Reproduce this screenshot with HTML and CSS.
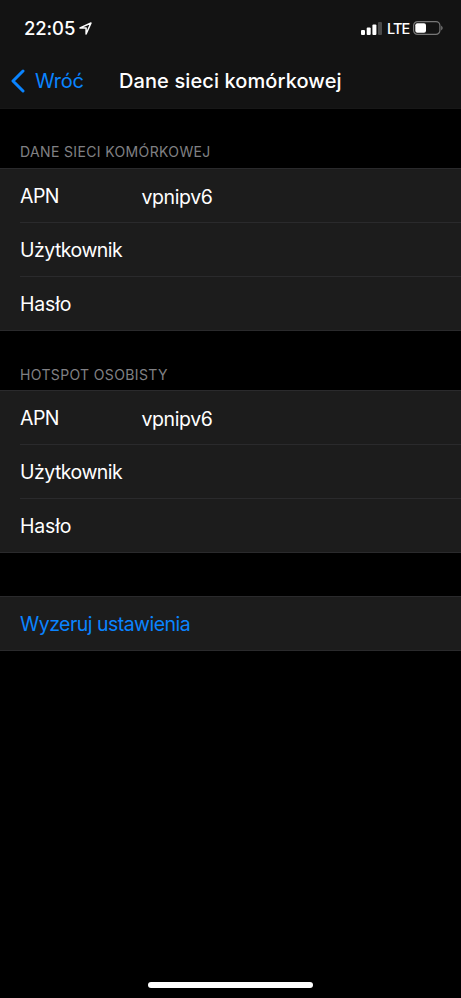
FILE: index.html
```html
<!DOCTYPE html>
<html lang="pl">
<head>
<meta charset="utf-8">
<title>Dane sieci komórkowej</title>
<link rel="stylesheet" href="styles.css">
</head>
<body>
<div class="phone">
  <header>
    <div class="status">
      <span class="time">22:05</span>
      <svg class="location" width="13" height="13" viewBox="0 0 13 13"><path d="M1 5.9 12 1 7.1 12V5.9Z"/></svg>
      <svg class="signal" width="21" height="13" viewBox="0 0 21 13"><rect x="0" y="8" width="4" height="5" rx="1"/><rect x="5.7" y="5.5" width="4" height="7.5" rx="1"/><rect x="11.4" y="2.6" width="4" height="10.4" rx="1"/><rect class="dim" x="17" y="0" width="4" height="13" rx="1"/></svg>
      <span class="lte">LTE</span>
      <svg class="battery" width="30" height="14" viewBox="0 0 30 14"><rect class="outline" x=".6" y=".6" width="26.3" height="12.8" rx="4"/><rect x="2.3" y="2.3" width="10.7" height="9.4" rx="2"/><path class="cap" d="M28.2 4.5q3 2.5 0 5Z"/></svg>
    </div>
    <nav>
      <svg class="chevron" width="14" height="24" viewBox="0 0 14 24"><path d="M12 2 2 12l10 10"/></svg>
      <span class="back">Wróć</span>
      <h1>Dane sieci komórkowej</h1>
    </nav>
  </header>
  <main>
    <h2>DANE SIECI KOMÓRKOWEJ</h2>
    <section>
      <div class="row"><span class="label">APN</span><span class="value">vpnipv6</span></div>
      <div class="row"><span class="label">Użytkownik</span></div>
      <div class="row"><span class="label wide">Hasło</span></div>
    </section>
    <h2 class="second">HOTSPOT OSOBISTY</h2>
    <section>
      <div class="row"><span class="label">APN</span><span class="value">vpnipv6</span></div>
      <div class="row"><span class="label">Użytkownik</span></div>
      <div class="row"><span class="label wide">Hasło</span></div>
    </section>
    <section class="reset"><div class="row">Wyzeruj ustawienia</div></section>
  </main>
  <div class="home"></div>
</div>
</body>
</html>
```
FILE: styles.css
```css
* { box-sizing: border-box; }
body { margin: 0; background: #000; color: #fff; font-family: Inter, sans-serif; }
.phone { width: 461px; height: 998px; display: flex; flex-direction: column; overflow: hidden; }
header { height: 109px; background: #131313; border-bottom: 1px solid #171717; }
.status { height: 56px; display: flex; align-items: center; padding: 0 18px 0 24px; }
.time { font-size: 18.5px; font-weight: 500; letter-spacing: -.1px; width: 52px; white-space: nowrap; }
.location { margin-left: 3px; fill: none; stroke: #fff; stroke-width: 1.5; stroke-linejoin: round; }
.signal { margin-left: auto; fill: #fff; }
.dim { fill: #4a4a4a; }
.lte { font-size: 14.5px; font-weight: 500; letter-spacing: -.9px; width: 22px; margin: 0 4px 0 5px; white-space: nowrap; }
.battery { fill: #fff; }
.outline { fill: none; stroke: #777; stroke-width: 1.2; }
.cap { fill: #777; }
nav { height: 50px; display: flex; align-items: center; padding-left: 10.5px; }
.chevron { fill: none; stroke: #0a84ff; stroke-width: 3; stroke-linecap: round; stroke-linejoin: round; }
.back { color: #0a84ff; font-size: 20px; letter-spacing: -.2px; width: 84px; margin-left: 10.5px; }
h1 { margin: 0; font-size: 20px; font-weight: 500; letter-spacing: .1px; white-space: nowrap; }
h2 { margin: 0; height: 59px; padding: 34px 20px 0; font-size: 14px; line-height: 18px; font-weight: 400; letter-spacing: .36px; color: #808084; }
.second { padding-top: 35px; }
section { height: 163px; background: #1c1c1c; border-top: 1px solid #2a2a2c; border-bottom: 1px solid #2a2a2c; padding-left: 20px; }
.row { height: 53px; display: flex; align-items: center; font-size: 19.5px; letter-spacing: -.52px; }
.row + .row { height: 54px; border-top: 1px solid #2a2a2c; }
.label { width: 121.5px; }
.wide { letter-spacing: -.2px; }
.value { padding-top: 2px; letter-spacing: -.4px; }
.reset { height: 55px; margin-top: 43px; color: #0a84ff; }
.home { width: 165px; height: 6px; border-radius: 3px; background: #fff; margin: auto auto 10px 148px; }
```
